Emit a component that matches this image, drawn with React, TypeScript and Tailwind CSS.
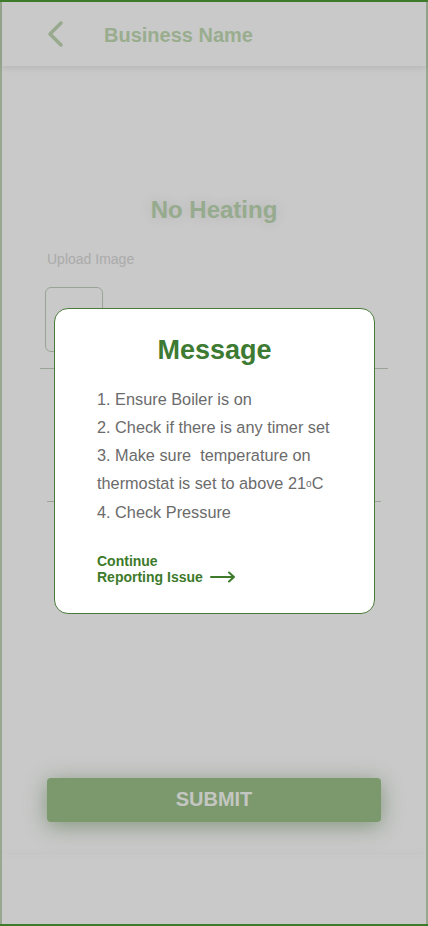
import React from "react";

export default function App() {
  return (
    <div
      className="relative h-[926px] w-[428px] overflow-hidden border-y-2 border-[#3d7a2a] bg-white"
      style={{ fontFamily: '"Liberation Sans", Arial, sans-serif' }}
    >
      <div className="flex h-full flex-col border-x-2 border-[#c1d5b6]">
        {/* header */}
        <div className="flex h-[64px] shrink-0 items-center shadow-[0_2px_6px_rgba(0,0,0,0.10)]">
          <svg className="ml-[42px] h-[30px] w-[24px]" viewBox="0 0 24 30" fill="none">
            <path d="M17 4 L6 15 L17 26" stroke="#c1d7b4" strokeWidth="3.5" strokeLinecap="round" strokeLinejoin="round" />
          </svg>
          <span className="ml-[36px] mt-[2px] text-[20px] font-bold text-[#c3dcb5]">Business Name</span>
        </div>

        <div className="flex flex-1 flex-col">
          <div className="mt-[126px] flex justify-center">
            <span
              className="text-[24px] font-bold text-[#bfd9b4]"
              style={{ textShadow: "0 0 14px rgba(0,0,0,0.12)" }}
            >
              No Heating
            </span>
          </div>
          <div className="ml-[45px] mt-[21px] text-[14px] text-[#d9d9d9]">Upload Image</div>
          <div className="ml-[43px] mt-[17px] h-[65px] w-[58px] rounded-[6px] border border-[#c4d0bf]" />
          <div className="ml-[38px] mr-[38px] mt-[16px] h-px bg-[#c4d0bf]" />
          <div className="ml-[45px] mr-[45px] mt-[132px] h-px bg-[#c4d0bf]" />

          <div className="mx-[45px] mt-[276px] flex h-[44px] items-center justify-center rounded-[4px] bg-[#9cc38b] shadow-[0_4px_22px_rgba(60,110,40,0.45)]">
            <span className="-mt-[2px] text-[20px] font-bold text-[#f8fbf5]">SUBMIT</span>
          </div>

          <div className="mt-[33px] h-px shadow-[0_-2px_6px_rgba(0,0,0,0.10)]" />
        </div>
      </div>

      {/* overlay */}
      <div className="absolute inset-x-0 bottom-0 top-0 bg-black/[0.21]" />

      {/* modal */}
      <div className="absolute left-[54px] top-[306px] w-[321px] rounded-[14px] border border-[#4a7a3a] bg-white pb-[28px] pl-[42px] pr-[10px] pt-[24px]">
        <div className="pr-[32px] text-center text-[27px] font-bold leading-[34px] text-[#3d7a32]">Message</div>
        <div className="mt-[18px] text-[16.3px] leading-[28px] text-[#6b6b6b]">
          <div>1. Ensure Boiler is on</div>
          <div>2. Check if there is any timer set</div>
          <div>3. Make sure&nbsp; temperature on</div>
          <div>
            thermostat is set to above 21<span className="text-[10px] align-[2px]">o</span>C
          </div>
          <div>4. Check Pressure</div>
        </div>
        <div className="mt-[27px] text-[14px] font-bold leading-[16px] text-[#3d7a2a]">
          <div>Continue</div>
          <div className="flex items-center">
            Reporting Issue
            <svg className="ml-[7px] h-[12px] w-[26px]" viewBox="0 0 26 12" fill="none">
              <path d="M1 6 H24 M19 1.5 L24 6 L19 10.5" stroke="#3d7a2a" strokeWidth="2" strokeLinecap="round" strokeLinejoin="round" />
            </svg>
          </div>
        </div>
      </div>
    </div>
  );
}
